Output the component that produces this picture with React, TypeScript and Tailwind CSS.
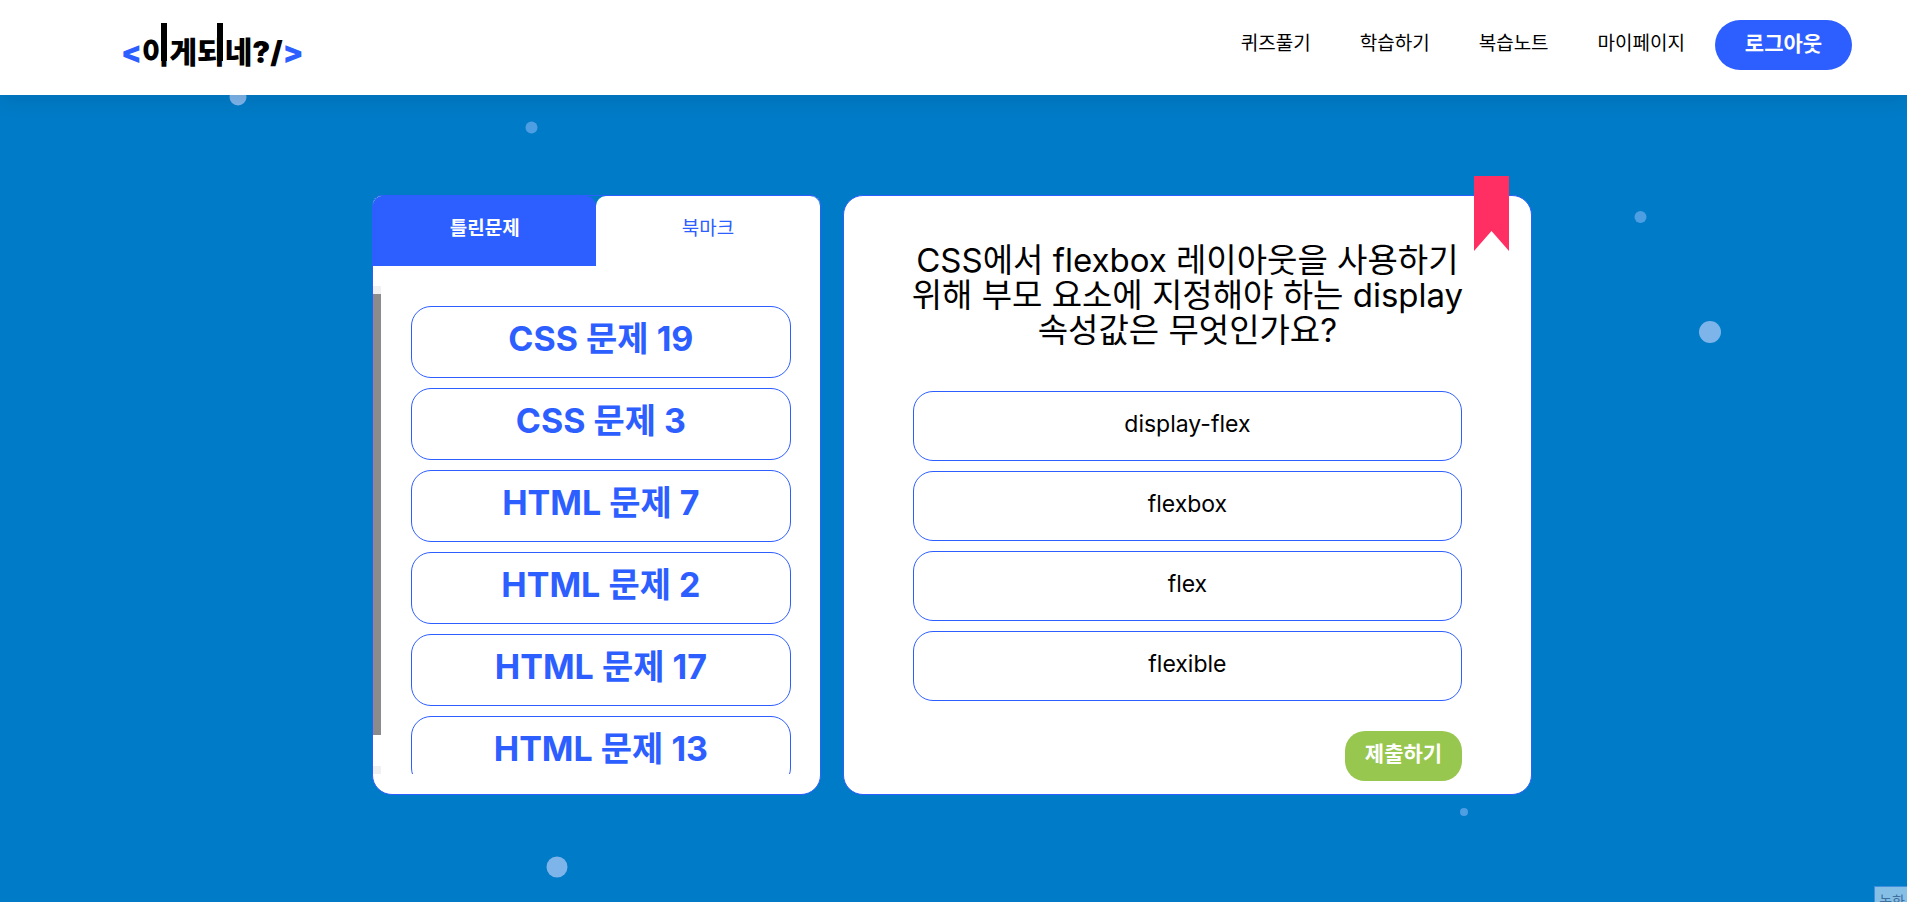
import { useState } from "react";

const problems = ["CSS 문제 19", "CSS 문제 3", "HTML 문제 7", "HTML 문제 2", "HTML 문제 17", "HTML 문제 13"];
const choices = ["display-flex", "flexbox", "flex", "flexible"];
const menu = ["퀴즈풀기", "학습하기", "복습노트", "마이페이지"];

/* A syllable whose vertical vowel stroke rises above the line. */
function Tall({ children }: { children: string }) {
  return (
    <span className="relative">
      {children}
      <span className="absolute -top-[11px] right-[2px] h-[38px] w-[6px] bg-black" />
    </span>
  );
}

function Logo() {
  return (
    <a href="#" className="flex h-[60px] items-center text-[30px] leading-[64px] font-black text-black">
      <span className="text-[#2d5eff]">&lt;</span>
      <span>
        <Tall>이</Tall>게<Tall>되</Tall>네?/
      </span>
      <span className="text-[#2d5eff]">&gt;</span>
    </a>
  );
}

function Header() {
  return (
    <header className="relative z-10 flex h-[95px] shrink-0 items-start justify-between bg-white pr-[55px] pl-[121px] shadow-[0_4px_20px_rgba(0,0,0,0.1)]">
      <div className="pt-[22px]">
        <Logo />
      </div>
      <nav className="flex items-start pt-5">
        <ul className="flex gap-[49px] pr-[30px] text-[19px] leading-[48px] text-black">
          {menu.map((m) => (
            <li key={m}>
              <a href="#">{m}</a>
            </li>
          ))}
        </ul>
        <button type="button" className="flex h-[50px] w-[137px] justify-center rounded-[25px] bg-[#2d5eff] text-[21px] leading-[48px] font-bold text-white">
          로그아웃
        </button>
      </nav>
    </header>
  );
}

function ProblemPanel() {
  const [tab, setTab] = useState(0);
  return (
    <section className="flex h-[600px] flex-col overflow-hidden rounded-t-[10px] rounded-b-[20px] border border-[#2d5eff] bg-white">
      <div className="grid h-[70px] shrink-0 grid-cols-2 bg-[#007bc7] text-[19px] leading-[66px]">
        <button type="button" onClick={() => setTab(0)} aria-pressed={tab === 0} className="flex justify-center rounded-t-[10px] bg-[#2d5eff] font-bold text-white">
          틀린문제
        </button>
        <button type="button" onClick={() => setTab(1)} aria-pressed={tab === 1} className="flex justify-center rounded-t-[10px] bg-white text-[#2d5eff]">
          북마크
        </button>
      </div>
      <div className="my-5 flex min-h-0 flex-1">
        <div className="flex w-2 flex-col bg-white">
          <div className="h-2 bg-[#f0f0f0]" />
          <div className="flex-1">
            <div className="h-[441px] bg-[#8b8b8b]" />
          </div>
          <div className="h-2 bg-[#f0f0f0]" />
        </div>
        <ul className="flex flex-1 flex-col gap-2.5 overflow-hidden py-5 pr-[29px] pl-[30px]">
          {problems.map((p) => (
            <li key={p} className="shrink-0">
              <button type="button" className="flex h-[72px] w-full justify-center rounded-[20px] border border-[#2d5eff] text-[34px] leading-[64px] font-bold text-[#2d5eff]">
                {p}
              </button>
            </li>
          ))}
        </ul>
      </div>
    </section>
  );
}

function QuestionPanel() {
  return (
    <section className="relative h-[600px] rounded-[20px] border border-[#2d5eff] bg-white px-[69px] pt-[47px]">
      <button type="button" aria-label="북마크" className="absolute -top-5 right-[22px]">
        <svg width="35" height="75" viewBox="0 0 35 75">
          <path d="M0 0H35V75L17.5 55L0 75Z" fill="#ff2e63" />
        </svg>
      </button>
      <h2 className="-mx-2 text-center text-[33px] leading-[35px] whitespace-nowrap text-black">
        CSS에서 flexbox 레이아웃을 사용하기
        <br />
        위해 부모 요소에 지정해야 하는 display
        <br />
        속성값은 무엇인가요?
      </h2>
      <ul className="mt-[43px] flex flex-col gap-2.5">
        {choices.map((c) => (
          <li key={c}>
            <button type="button" className="flex h-[70px] w-full justify-center rounded-[20px] border border-[#2d5eff] text-[23px] leading-[64px] text-black">
              {c}
            </button>
          </li>
        ))}
      </ul>
      <div className="mt-[30px] flex justify-end">
        <button type="button" className="flex h-[50px] w-[117px] justify-center rounded-[20px] bg-[#97c74e] text-[21px] leading-[46px] font-bold text-white">
          제출하기
        </button>
      </div>
    </section>
  );
}

function Bubbles() {
  return (
    <svg className="absolute inset-0 h-full w-full" aria-hidden="true">
      <g fill="#7db4ea">
        <circle cx="238" cy="97" r="8.5" />
        <circle cx="1710" cy="332" r="11" />
        <circle cx="557" cy="867" r="10.5" />
      </g>
      <g fill="#4d9ee3">
        <circle cx="531.5" cy="127.5" r="6" />
        <circle cx="1640.5" cy="217" r="6" />
        <circle cx="1464" cy="812" r="4" />
      </g>
    </svg>
  );
}

export default function App() {
  return (
    <div className="relative flex h-screen flex-col overflow-hidden bg-[#007bc7] font-['Inter','Noto_Sans_CJK_KR',sans-serif]">
      <Bubbles />
      <Header />
      <main className="relative flex justify-center pt-[100px] pr-[3px]">
        <div className="grid w-full max-w-[1160px] grid-cols-[minmax(0,28fr)_minmax(0,43fr)] gap-[22px]">
          <ProblemPanel />
          <QuestionPanel />
        </div>
      </main>
      <div className="absolute right-0 -bottom-3.5 border border-r-0 border-[#3f8fdc] bg-[#85bfe6] pr-0.5 pl-1 text-sm leading-7 text-[#3f6f9f]">녹화</div>
    </div>
  );
}
